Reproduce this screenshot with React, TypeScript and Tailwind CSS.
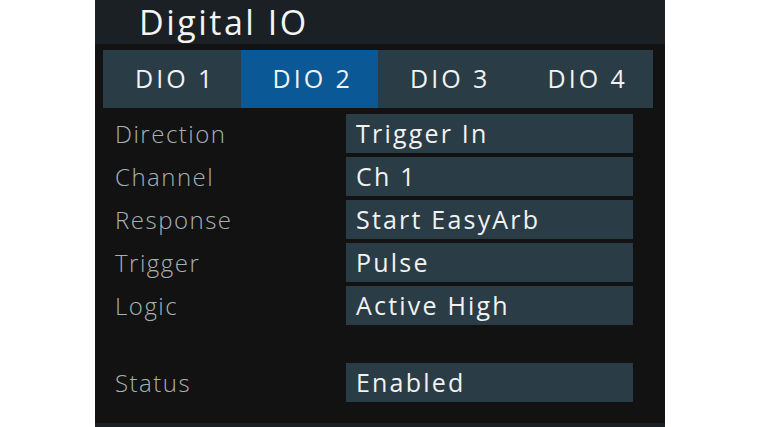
const tabs = ['DIO 1', 'DIO 2', 'DIO 3', 'DIO 4'];

const rows = [
  { label: 'Direction', value: 'Trigger In' },
  { label: 'Channel', value: 'Ch 1' },
  { label: 'Response', value: 'Start EasyArb' },
  { label: 'Trigger', value: 'Pulse' },
  { label: 'Logic', value: 'Active High' },
];

function Row({ label, value }: { label: string; value: string }) {
  return (
    <div className="flex items-center h-[39px]">
      <div className="w-[251px] pl-[20px] text-[24px] font-light text-[#a7b1b4] tracking-[1.5px]">
        {label}
      </div>
      <div className="w-[287px] h-[39px] bg-[#2a3c45] pl-[10px] flex items-center text-[25px] text-[#f2f2f2] tracking-[2.2px]">
        {value}
      </div>
    </div>
  );
}

export default function App() {
  const active = 1;
  return (
    <div className="w-full h-[427px] bg-white flex justify-center" style={{ fontFamily: '"Open Sans", "Noto Sans", sans-serif' }}>
      <div className="w-[570px] h-[427px] flex flex-col bg-[#1b2024]">
        {/* Header */}
        <div className="h-[44px] pl-[44px] flex items-center text-[34px] text-[#f4f4f4] leading-none tracking-[2.5px]">
          Digital IO
        </div>

        {/* Body */}
        <div className="flex-1 bg-[#121212] mb-[4px] flex flex-col">
          <div className="ml-[8px] mt-[6px] w-[550px] h-[58px] flex bg-[#2a3c45]">
            {tabs.map((t, i) => (
              <div
                key={t}
                className={
                  'flex-1 flex items-center justify-center pl-[7px] text-[25px] text-[#f2f2f2] tracking-[3px] ' +
                  (i === active ? 'bg-[#0b5896]' : '')
                }
              >
                {t}
              </div>
            ))}
          </div>

          <div className="mt-[6px] flex flex-col gap-[4px]">
            {rows.map((r) => (
              <Row key={r.label} label={r.label} value={r.value} />
            ))}
          </div>

          <div className="mt-[38px]">
            <Row label="Status" value="Enabled" />
          </div>
        </div>
      </div>
    </div>
  );
}
